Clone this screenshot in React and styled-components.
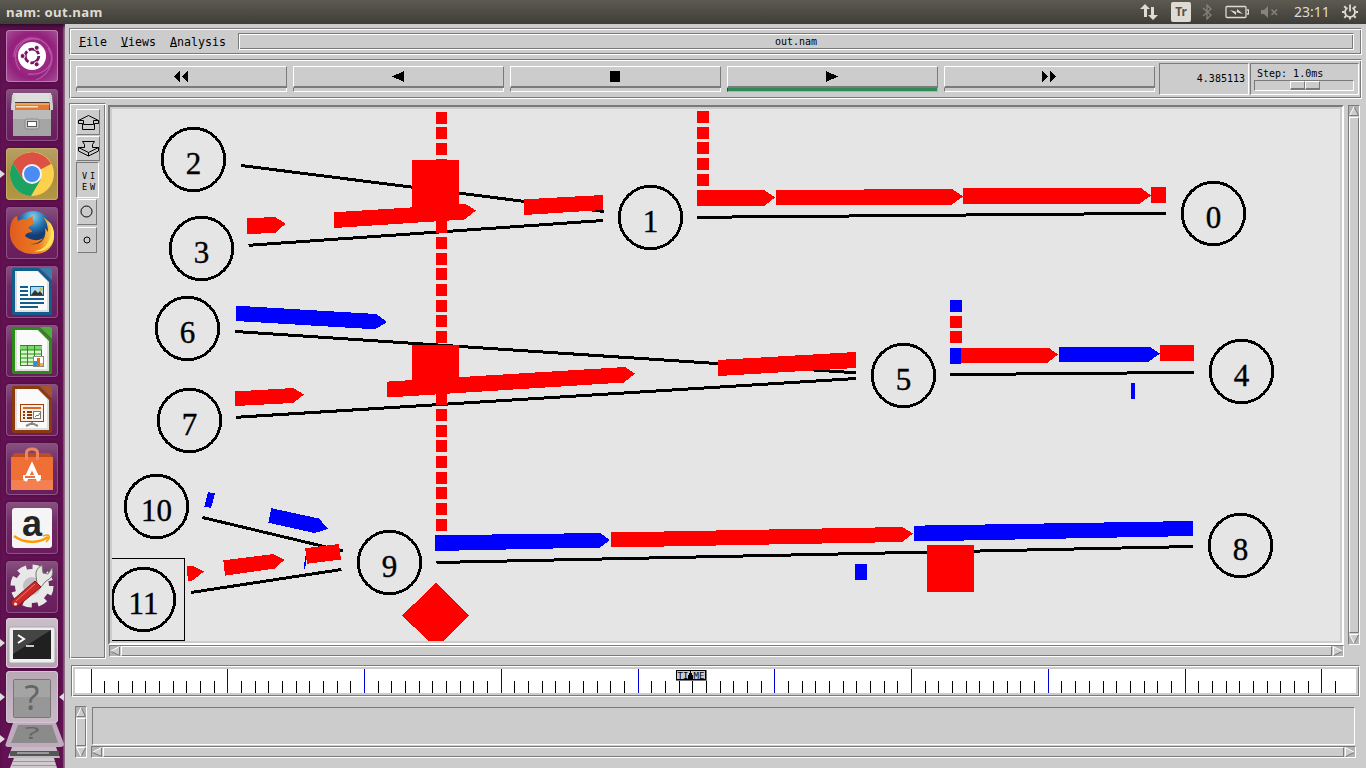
import React from "react";
import styled, { createGlobalStyle, css } from "styled-components";

const DARK = "#7a7a7a";
const FACE = "#cccccc";
const RED = "#ff0000";
const BLUE = "#0000ff";

const Global = createGlobalStyle`
  * { box-sizing: border-box; }
  html, body { margin: 0; padding: 0; overflow: hidden; }
  svg { display: block; }
`;

const raised = css`
  border: 1px solid;
  border-color: #fff ${DARK} ${DARK} #fff;
`;
const sunken = css`
  border: 1px solid;
  border-color: ${DARK} #fff #fff ${DARK};
`;
const groove = css`
  ${sunken}
  box-shadow: inset 1px 1px #fff, inset -1px -1px ${DARK};
`;

const Screen = styled.div`
  width: 1366px;
  height: 768px;
  display: flex;
  flex-direction: column;
  background: ${FACE};
  overflow: hidden;
`;

/* ---------- desktop bar ---------- */
const TopBar = styled.header`
  height: 24px;
  flex: none;
  display: flex;
  align-items: center;
  justify-content: space-between;
  padding: 0 7px 0 6px;
  background: linear-gradient(#5c5a50, #3e3d38);
  color: #dfdbd2;
`;
const WindowTitle = styled.div`
  font: bold 13.2px/24px "Noto Sans", sans-serif;
  letter-spacing: 0.4px;
  white-space: pre;
`;
const Tray = styled.div`
  display: flex;
  align-items: center;
  height: 24px;
`;
const Layout = styled.div`
  width: 20px;
  height: 20px;
  margin: 0 11px 0 13px;
  border-radius: 2px;
  background: #dfdbd2;
  color: #55534b;
  font: bold 12px/20px "Noto Sans", sans-serif;
  text-align: center;
`;
const Clock = styled.div`
  width: 37px;
  margin: 0 10px 0 15px;
  font: 14px/24px "Noto Sans", sans-serif;
`;
const Gap = styled.span`
  width: ${(p) => p.$w}px;
`;

const Body = styled.div`
  flex: 1;
  display: flex;
  min-height: 0;
`;

/* ---------- launcher ---------- */
const Launcher = styled.nav`
  width: 65px;
  flex: none;
  padding: 6px 0 0 6px;
  background: linear-gradient(90deg, #631253, #600f50 96%, #8d5c82 98%, #ab8ea5);
  box-shadow: inset 0 4px 4px -2px #2b0925;
  overflow: hidden;
`;
const Tile = styled.div`
  position: relative;
  width: 52px;
  height: ${(p) => p.$h || 52}px;
  margin-bottom: ${(p) => (p.$gap === undefined ? 7 : p.$gap)}px;
  border-radius: 4px;
  background: ${(p) => p.$bg || "linear-gradient(#87527f, #6f2a65 40%, #6a1c5c)"};
  box-shadow: inset 0 0 0 1px ${(p) => p.$edge || "#8d5384"}, 0 0 3px #3f0a35;
  display: flex;
  align-items: center;
  justify-content: center;
`;
const Pip = styled.i`
  position: absolute;
  top: 50%;
  margin-top: -4px;
  ${(p) => (p.$right ? "left: 53px; border-right: 5px solid #ddd;" : "left: -6px; border-left: 5px solid #ddd;")}
  border-top: 4px solid transparent;
  border-bottom: 4px solid transparent;
`;

/* ---------- nam window ---------- */
const Main = styled.main`
  flex: 1;
  padding: 4px 4px 0;
  display: flex;
  flex-direction: column;
  background: ${FACE};
  font-family: "DejaVu Sans Mono", monospace;
  color: #000;
`;
const MenuBar = styled.div`
  ${groove}
  height: 27px;
  flex: none;
  margin-bottom: 4px;
  padding: 4px 7px 3px 9px;
  display: flex;
  align-items: center;
`;
const MenuItem = styled.div`
  margin-right: 14px;
  font-size: 11.63px;
  line-height: 16px;
  u { text-decoration: underline; text-underline-offset: 0px; text-decoration-thickness: 1px; text-decoration-skip-ink: none; }
`;
const FileName = styled.div`
  ${groove}
  flex: 1;
  height: 17px;
  margin: -1px 0 0 -2px;
  font-size: 10px;
  line-height: 15px;
  text-align: center;
`;
const Toolbar = styled.div`
  ${groove}
  height: 40px;
  flex: none;
  margin-bottom: 4px;
  padding: 3px 1px 0 6px;
  display: flex;
`;
const Control = styled.div`
  width: 211px;
  margin: 3px 6px 0 0;
`;
const ControlFace = styled.div`
  height: 22px;
  border-style: solid;
  border-width: 1px 1px 2px 1px;
  border-color: #fff ${DARK} ${DARK} #fff;
  display: flex;
  align-items: center;
  justify-content: center;
  padding-right: 1px;
`;
const ControlStrip = styled.div`
  height: 4px;
  border: 1px solid;
  border-top: 0;
  border-color: ${(p) => (p.$on ? "#2e8b57 #8fc4a5 #8fc4a5 #1c5335" : `${DARK} #fff #fff ${DARK}`)};
  background: ${(p) => (p.$on ? "#2e8b57" : FACE)};
`;
const TimeBox = styled.div`
  ${sunken}
  width: 90px;
  height: 32px;
  margin: 0 1px 0 -2px;
  padding-right: 3px;
  font-size: 10px;
  line-height: 30px;
  text-align: right;
`;
const StepBox = styled.div`
  ${sunken}
  width: 109px;
  height: 32px;
  padding: 3px 3px 0;
  font-size: 10px;
  line-height: 14px;
  white-space: pre;
`;
const StepLabel = styled.div`
  height: 13px;
  padding-left: 3px;
`;
const StepTrough = styled.div`
  ${sunken}
  width: 100px;
  height: 11px;
  padding-left: 35px;
  display: flex;
`;
const StepThumb = styled.div`
  width: 15px;
  height: 9px;
  border-style: solid;
  border-width: 1px 1px 2px 1px;
  border-color: #fff ${DARK} ${DARK} #fff;
`;

const Work = styled.div`
  height: 556px;
  flex: none;
  display: flex;
`;
const Side = styled.div`
  ${groove}
  width: 37px;
  height: 556px;
  margin-right: 2px;
  padding: 5px 0 0 6px;
`;
const SideButton = styled.div`
  ${(p) => (p.$down ? sunken : raised)}
  width: ${(p) => p.$w}px;
  height: ${(p) => p.$h}px;
  margin: 0 0 ${(p) => p.$gap || 0}px ${(p) => p.$x || 0}px;
  display: flex;
  align-items: center;
  justify-content: center;
`;
const ViewLabel = styled.div`
  font-size: 8.5px;
  line-height: 11px;
  letter-spacing: 3px;
  white-space: pre;
  padding: 4px 0 0 5px;
`;
const CanvasColumn = styled.div`
  width: 1236px;
  padding-top: 2px;
`;
const CanvasFrame = styled.div`
  height: 540px;
  border: 2px solid;
  border-color: ${DARK} #fff #fff ${DARK};
  padding: 2px;
`;
const Canvas = styled.svg`
  width: 1228px;
  height: 532px;
  background: #e5e5e5;
`;
const HBar = styled.div`
  ${sunken}
  height: 12px;
  margin-left: ${(p) => p.$inset || 0}px;
  display: flex;
  gap: 1px;
`;
const VBar = styled.div`
  ${sunken}
  width: 12px;
  height: ${(p) => p.$h}px;
  margin: ${(p) => p.$m || 0};
  display: flex;
  flex-direction: column;
  gap: 1px;
`;
const Thumb = styled.div`
  ${raised}
  flex: 1;
`;

const Timeline = styled.div`
  ${groove}
  width: 1289px;
  height: 32px;
  flex: none;
  margin: 6px 0 9px 2px;
  padding: 3px;
`;
const Ruler = styled.svg`
  width: 1281px;
  height: 24px;
  background: #fff;
`;
const Bottom = styled.div`
  display: flex;
  margin-left: 6px;
  gap: 4px;
`;
const NoteColumn = styled.div`
  width: 1265px;
`;
const Note = styled.div`
  ${sunken}
  height: 38px;
  margin: 1px 1px 1px;
`;

const arrowShapes = {
  left: ["M9 1 L1 5 L9 9Z", "M9.5 .5 L1 5", "M1 5.5 L9.5 9.5 V1"],
  right: ["M1 1 L9 5 L1 9Z", "M.5 9 V.5 L9 5", "M9 5.5 L1 9.5"],
  up: ["M1 9 L5 1 L9 9Z", "M1 9 L5 .5", "M5.5 1 L9.5 9.5 H1"],
  down: ["M1 1 L9 1 L5 9Z", "M9 .5 H.5 L5 9", "M5.5 9 L9.5 1"],
};
function ScrollArrow({ dir }) {
  const [fill, light, dark] = arrowShapes[dir];
  return (
    <svg width="10" height="10" viewBox="0 0 10 10" fill="none">
      <rect width="10" height="10" fill="#b3b3b3" />
      <path d={fill} fill="#ccc" />
      <path d={dark} stroke={DARK} />
      <path d={light} stroke="#fff" />
    </svg>
  );
}

/* ---------- network scene ---------- */
const nodes = [
  ["2", 193.5, 159.5], ["3", 201.5, 248.5], ["1", 650.5, 217.5], ["0", 1213.5, 213.5],
  ["6", 187.5, 328.5], ["7", 189.5, 420.5], ["5", 903.5, 375.5], ["4", 1241.5, 371.5],
  ["10", 156.5, 506.5], ["11", 143.5, 599.5], ["9", 389.5, 562.5], ["8", 1240.5, 545.5],
];
const links = [
  [241, 165.5, 604, 211.5], [248.5, 245.3, 603, 220.5], [697.5, 217.3, 1166, 213.3],
  [235, 331.5, 856, 372.8], [236, 417.3, 856, 378.5], [950, 374.6, 1194, 372.4],
  [202.5, 517.5, 343, 551], [191, 592.5, 341.5, 569.5], [436.5, 562.5, 1193, 546.5],
];
const shapes = [
  [RED, "246.7,218.3 275,217 285.7,223.7 275,233 247,234"],
  [RED, "333.6,212.3 465.5,204 476,210.5 464.5,219.5 334,228"],
  [RED, "524,199.3 603,195 603,210 524,215"],
  [RED, "697,190 764,190 775,197.5 764,206 697,206"],
  [RED, "775.5,190 952,189 963,196.5 951,205 776,205"],
  [RED, "963,188 1141,188 1151,195.5 1139,204 963,204"],
  [RED, "1151,187 1166,187 1166,203 1151,203"],
  [BLUE, "236,305.7 376.5,314 387,322 375,329.3 236,321"],
  [RED, "235,391.5 293,388 304,394.5 293,403 235.5,406"],
  [RED, "387,381.6 625,367 635,373.5 624,382.5 387.5,397.5"],
  [RED, "717.5,360 856,352 856,368 718,376"],
  [RED, "961,348 1049,348 1058,354.5 1047,363 961,363"],
  [BLUE, "950,348 961,348 961,364 950,364"],
  [BLUE, "1058.5,347 1150,347 1160,353.5 1148,362 1059,362"],
  [RED, "1160,345 1194,345 1194,361 1160,361"],
  [BLUE, "1131,383 1135,383 1135,399 1131,399"],
  [BLUE, "435,535.3 600,533 610,540 600,547.5 435,551"],
  [RED, "611,532.5 902,527 913,533.5 902,542 611,547.5"],
  [BLUE, "914,525.7 1193,521 1193,536 914,541.5"],
  [BLUE, "855,564 867,564 867,580 855,580"],
  [BLUE, "208,492 215,493.5 211,508 204.5,506.5"],
  [BLUE, "271.3,508.2 319,518.5 328,529 314.5,533 268.3,522.7"],
  [BLUE, "305.5,556 307,556 305,569 303.5,569"],
  [RED, "305.2,548.3 339,544 341,559.5 307,563.7"],
  [RED, "223.3,560.3 273.5,554 284.7,559.7 274.7,568.5 225,575.7"],
  [RED, "186.5,566 192.5,566 204,571.5 192.5,580.5 188,580.5"],
  [RED, "412,160 459,160 459,207 412,207"],
  [RED, "412,345 459,345 459,392 412,392"],
  [RED, "927,545 974,545 974,592 927,592"],
  [RED, "436,583 469,615.5 436,648 402,615.5"],
];
const queues = [
  ...Array.from({ length: 27 }, (_, k) => [436, Math.round(111.7 + k * 15.654), 11, RED]),
  ...[111, 127, 142, 158, 174].map((y) => [697, y, 12, RED]),
  [950, 300, 12, BLUE], [950, 316, 12, RED], [950, 331, 12, RED],
];

const NodeLabel = styled.text`
  font-family: "Liberation Serif", serif;
  font-size: 31px;
  text-anchor: middle;
  stroke: #000;
  stroke-width: 0.4px;
`;

function Scene() {
  return (
    <Canvas viewBox="112 109 1228 532" shapeRendering="crispEdges">
      <g stroke="#000" strokeWidth="3">
        {links.map(([a, b, c, d]) => <line key={a + b} x1={a} y1={b} x2={c} y2={d} />)}
      </g>
      {queues.map(([x, y, w, c]) => <rect key={x + "-" + y} x={x} y={y} width={w} height={12} fill={c} />)}
      {shapes.map(([c, p]) => <polygon key={p} points={p} fill={c} />)}
      <path d="M112 558.5H184.5V640.5H112" fill="none" stroke="#000" />
      {nodes.map(([n, x, y]) => (
        <g key={n}>
          <circle cx={x} cy={y} r="31.2" fill="none" stroke="#000" strokeWidth="2.9" />
          <NodeLabel x={x} y={y + 14}>{n}</NodeLabel>
        </g>
      ))}
    </Canvas>
  );
}

const MarkerText = styled.text`
  font: 9px "DejaVu Sans Mono", monospace;
`;
function TimeRuler() {
  return (
    <Ruler viewBox="75 669 1281 24" shapeRendering="crispEdges">
      {Array.from({ length: 92 }, (_, k) => {
        const x = Math.floor(91 + k * 13.676);
        const major = k % 10 === 0;
        return <rect key={k} x={x} y={major ? 669 : 681} width="1" height={major ? 24 : 12} fill={major ? "#0000d8" : "#000"} />;
      })}
      <rect x="676" y="670" width="31" height="11" fill={DARK} />
      <rect x="676.5" y="670.5" width="29" height="9" fill="#ccc" stroke="#000" />
      <MarkerText x="677.5" y="678.500">TI</MarkerText>
      <MarkerText x="693.5" y="678.500">ME</MarkerText>
      <path d="M690 670h1v3h1v2h1v5h-5v-5h1v-2h1z" />
    </Ruler>
  );
}

/* ---------- launcher drawings ---------- */
const DashIcon = () => (
  <svg width="52" height="52" viewBox="0 0 52 52">
    <path d="M8 27C8 9 28 2 40 14s5 30-10 36M14 40C2 24 16 4 34 10M42 18c10 16-4 28-20 26" fill="none" stroke="#d282bd" strokeWidth="1.3" opacity=".5" />
    <circle cx="26" cy="26" r="14" fill="#fff" />
    <circle cx="26" cy="26" r="6.8" fill="none" stroke="#771465" strokeWidth="2.8" strokeDasharray="12.2 2" />
    <g fill="#771465" stroke="#fff" strokeWidth="1"><circle cx="16.6" cy="26" r="2.5" /><circle cx="30.7" cy="17.8" r="2.5" /><circle cx="30.7" cy="34.3" r="2.5" /></g>
  </svg>
);
const FilesIcon = () => (
  <svg width="52" height="52" viewBox="0 0 52 52">
    <path d="M7 4h38l2 15H5z" fill="#ddd" /><path d="M8 13h36v10H8z" fill="#4a3b30" />
    <path d="M9 14h34v3H9z" fill="#f2a25c" /><path d="M9 16h34v6H9z" fill="#e27a33" /><path d="M10 17h22v1.5H10z" fill="#fde2bf" />
    <path d="M7 21h38v26H7z" fill="#a5a5a3" /><path d="M7 21h38v9H7z" fill="#bbb" /><path d="M6 6h3v15H5zM43 6h3l1 15h-3z" fill="#d2d2d0" />
    <rect x="19" y="30" width="14" height="10" rx="2" fill="#c4c4c2" stroke="#888" /><rect x="21.5" y="32.500" width="9" height="5" fill="#fff" stroke="#555" />
  </svg>
);
const ChromeIcon = () => (
  <svg width="52" height="52" viewBox="0 0 52 52">
    <circle cx="26" cy="26" r="22" fill="#fdd14c" />
    <path d="M26 26L7 15A22 22 0 0 1 45 16Z" fill="#dd5144" />
    <path d="M26 16H45A22 22 0 0 0 7 15L17 31Z" fill="#dd5144" />
    <path d="M7 15A22 22 0 0 0 25 48L35 31 26 35 17 31Z" fill="#1ca261" />
    <circle cx="26" cy="26" r="10" fill="#f4f4f4" /><circle cx="26" cy="26" r="8" fill="#4b8bf4" />
  </svg>
);
const FirefoxIcon = () => (
  <svg width="52" height="52" viewBox="0 0 52 52">
    <defs>
      <radialGradient id="globe" cx=".5" cy=".15"><stop stopColor="#7fd3ee" /><stop offset=".6" stopColor="#2674b0" /><stop offset="1" stopColor="#163c72" /></radialGradient>
      <linearGradient id="fox" x1="0" x2="1"><stop stopColor="#df5b1f" /><stop offset=".65" stopColor="#ee7b20" /><stop offset="1" stopColor="#ffdf55" /></linearGradient>
    </defs>
    <circle cx="27" cy="23" r="19" fill="url(#globe)" />
    <path d="M6 14c1-3 4-5 5-5l1 5c3-2 6-2 9-2l6-3c-1 4 0 6 2 8-3 0-5 2-7 4 2 1 4 2 4 4-3 0-6 1-7 4 5 4 12 6 18 2-3 5-9 6-13 6 11 2 17-6 15-16l3 4c0-7-2-12-5-15 7 4 12 12 11 21C47 42 37 48 27 47 12 47 3 36 4 24c0-5 1-8 2-10z" fill="url(#fox)" />
    <path d="M42 14c4 7 4 17-1 23-4 5-9 7-14 7 9 2 20-3 21-16 0-6-2-11-6-14z" fill="#ffe35c" />
  </svg>
);
function DocIcon({ main, light, children }) {
  return (
    <svg width="52" height="52" viewBox="0 0 52 52">
      <path d="M8 2H33L46 15V48q0 1-2 1H8q-2 0-2-2V4q0-2 2-2z" fill={main} />
      <path d="M34 2h10q2 0 2 2v10z" fill={light} />
      <path d="M9 5H32L43 16V46H9z" fill="#dedede" /><path d="M11 5H31L41 15V44H11z" fill="#fafafa" />
      {children}
    </svg>
  );
}
const WriterIcon = () => (
  <DocIcon main="#115e8e" light="#347fab">
    <path d="M14 21h8M14 25h8M14 29h8M14 33h24M14 37h24M14 41h18" stroke="#115e8e" strokeWidth="2" />
    <rect x="24.500" y="20.500" width="13" height="9" fill="#a7dcf5" stroke="#115e8e" /><path d="M25 29l4-5 3 3 2-2 3 4z" fill="#333" /><circle cx="35" cy="23" r="1.500" fill="#e3b91d" />
  </DocIcon>
);
const CalcIcon = () => (
  <DocIcon main="#2a8c16" light="#4caf38">
    <rect x="14.500" y="20.500" width="21" height="20" fill="#d7f7cd" stroke="#2a8c16" /><path d="M14 21h22v4H14z" fill="#7fd56f" /><path d="M14 25h22M14 29h22M14 33h22M14 37h22M21.500 20v21M28.500 20v21" stroke="#2a8c16" />
    <rect x="27.500" y="31.500" width="10" height="10" fill="#fff" stroke="#888" /><path d="M28 36h3v5h-3z" fill="#2f8fd0" /><path d="M31 33h3v8h-3z" fill="#dc6b22" /><path d="M34 38h3v3h-3z" fill="#efb52a" />
  </DocIcon>
);
const ImpressIcon = () => (
  <DocIcon main="#8a3a0c" light="#a55528">
    <path d="M20 42l6-3 6 3M26 38v3" stroke="#888" strokeWidth="2" fill="none" />
    <rect x="14.500" y="20.500" width="23" height="17" fill="#fceee2" stroke="#a33e08" /><path d="M17 24h18" stroke="#dc6825" strokeWidth="2" />
    <path d="M17 28h2M17 31h2M17 34h2M21 28h5M21 31h5M21 34h5" stroke="#8a3a0c" strokeWidth="2" />
    <rect x="27.500" y="27.500" width="7" height="7" fill="#fff" stroke="#777" /><path d="M29 33l2-2 1 1 2-3" stroke="#3b9c2f" fill="none" />
  </DocIcon>
);
const SoftwareIcon = () => (
  <svg width="52" height="52" viewBox="0 0 52 52">
    <path d="M8 10h36l3 5H5z" fill="#be4c20" /><path d="M5 14h42v33H5z" fill="#ef6f35" /><path d="M5 37h42v10H5z" fill="#f28050" />
    <path d="M20.500 17v-7q0-4 5.500-4t5.500 4v7" fill="none" stroke="#eb8760" strokeWidth="3" />
    <path d="M19 38L26 23L33 38" fill="none" stroke="#fff" strokeWidth="4" /><path d="M17 34h18" stroke="#fff" strokeWidth="4" /><path d="M19 34h10" stroke="#ef6f35" strokeWidth="2" />
  </svg>
);
const AmazonLetter = styled.text`
  font: bold 36px "Liberation Sans", sans-serif;
  text-anchor: middle;
`;
const AmazonIcon = () => (
  <svg width="52" height="52" viewBox="0 0 52 52">
    <rect x="6" y="6" width="40" height="40" rx="3" fill="#f5f5f5" />
    <AmazonLetter x="26" y="34" fill="#242424">a</AmazonLetter>
    <path d="M8 34c9 7 24 8 34 1" fill="none" stroke="#ff9900" strokeWidth="2.300" /><path d="M37 34q5-2 6 0t-3 6" fill="none" stroke="#ff9900" strokeWidth="1.600" />
  </svg>
);
const SettingsIcon = () => (
  <svg width="52" height="52" viewBox="0 0 52 52">
    <circle cx="26" cy="25" r="18.500" fill="none" stroke="#e8e8e8" strokeWidth="6" strokeDasharray="8.500 6.030" />
    <circle cx="26" cy="25" r="13" fill="#c4bfc4" stroke="#e8e8e8" strokeWidth="8" />
    <path d="M31 22l-1-7q-1-7 6-11l1 8 5 1 4-6q3 9-6 13l-5 6z" fill="#e6e6e2" stroke="#777" />
    <path d="M29 20l6 6-23 19q-4 2-6-1-2-3 1-5z" fill="#cd2929" stroke="#801818" /><path d="M10 40L29 23" stroke="#ef7777" /><circle cx="9.500" cy="43" r="1.500" fill="#fff" />
  </svg>
);
const TerminalIcon = () => (
  <svg width="52" height="50" viewBox="0 0 52 50">
    <rect x="3" y="9" width="46" height="36" rx="2" fill="#eee" stroke="#aaa" />
    <rect x="7" y="12" width="38" height="29" fill="#202020" /><path d="M7 12h38L7 36z" fill="#444" />
    <path d="M12 17l6 4-6 4" fill="none" stroke="#fff" strokeWidth="2" /><path d="M20 28h8" stroke="#fff" strokeWidth="1.500" />
  </svg>
);
const Question = styled.text`
  font: 34px "Noto Sans", sans-serif;
  text-anchor: middle;
  fill: #666;
`;
const UnknownIcon = () => (
  <svg width="52" height="52" viewBox="0 0 52 52">
    <rect x="7.500" y="8.500" width="37" height="38" rx="1" fill="#979797" stroke="#777" /><path d="M8 9h36v17H8z" fill="#a4a4a4" />
    <Question x="26" y="39">?</Question>
  </svg>
);
const FoldedIcons = () => (
  <svg width="60" height="45" viewBox="0 0 60 45">
    <path d="M8 0h43l8 21q0 3-4 3H4q-5 0-3-4z" fill="#c0aabd" /><path d="M13 2h34l6 18H6z" fill="#8b8b8b" />
    <g transform="translate(27 16) scale(1 .5)"><Question>?</Question></g>
    <path d="M7 24h44l4 11H3z" fill="#c6bac4" /><path d="M5 28h49v5H5z" fill="#555" /><path d="M12 29h32v2H12z" fill="#999" /><path d="M5 33h49v2H5z" fill="#bbb" />
    <path d="M9 35h40l3 10H5z" fill="#d0cacf" /><path d="M8 38h42v1H8zM7 42h44v1H7z" fill="#999" />
  </svg>
);
const Folded = styled.div`
  position: relative;
  width: 58px;
  height: 45px;
  margin-left: -1px;
`;
const FoldedPip = styled(Pip)`
  left: -5px;
  top: 16px;
`;

function Dock() {
  return (
    <Launcher>
      <Tile $bg="radial-gradient(circle, #b23b98, #93207c 60%, #a45598)" $edge="#c27ab5"><DashIcon /></Tile>
      <Tile><FilesIcon /></Tile>
      <Tile $bg="linear-gradient(#b8a067, #aa8b3e 50%, #b49845)" $edge="#c5ae6d"><ChromeIcon /><Pip /></Tile>
      <Tile><FirefoxIcon /></Tile>
      <Tile><WriterIcon /></Tile>
      <Tile><CalcIcon /></Tile>
      <Tile><ImpressIcon /></Tile>
      <Tile><SoftwareIcon /></Tile>
      <Tile><AmazonIcon /></Tile>
      <Tile $gap={5}><SettingsIcon /></Tile>
      <Tile $h={50} $gap={3} $bg="linear-gradient(#cbbfc9, #b69fb3)" $edge="#d8ced6"><TerminalIcon /><Pip /></Tile>
      <Tile $gap={0} $bg="linear-gradient(#b9a7b6, #c7bac5)" $edge="#d3c5d1"><UnknownIcon /><Pip /><Pip $right /></Tile>
      <Folded><FoldedIcons /><FoldedPip /></Folded>
    </Launcher>
  );
}

/* ---------- controls ---------- */
const controls = [
  <path key="rw" d="M7 0v11L1 5.500zM15 0v11L9 5.500z" />,
  <path key="back" d="M14 0v11L2 5.500z" />,
  <path key="stop" d="M3 0h10v11H3z" />,
  <path key="play" d="M2 0v11L14 5.500z" />,
  <path key="ff" d="M1 0v11L7 5.500zM9 0v11l6-5.500z" />,
];

export default function App() {
  return (
    <Screen>
      <Global />
      <TopBar>
        <WindowTitle>nam: out.nam</WindowTitle>
        <Tray>
          <svg width="18" height="18" viewBox="0 0 18 18" fill="#dfdbd2"><path d="M5 1l5 5H7v8H4V6H0zM13 17l5-5h-4V4h-3v8H8z" /></svg>
          <Layout>Tr</Layout>
          <svg width="10" height="16" viewBox="0 0 10 16" fill="none" stroke="#85837a" strokeWidth="1.300"><path d="M1 4l8 7-4 4V1l4 4-8 7" /></svg>
          <Gap $w={13} />
          <svg width="24" height="14" viewBox="0 0 24 14" fill="none" stroke="#dfdbd2" strokeWidth="1.300"><rect x="1" y="1.500" width="20" height="11" rx="1" /><path d="M22 5h1.500v4H22" /><path d="M5 5l7 2V4l6 5-7-2v3z" fill="#dfdbd2" stroke="none" /></svg>
          <Gap $w={12} />
          <svg width="18" height="12" viewBox="0 0 18 12" fill="#85837a"><path d="M0 4h3l4-4v12L3 8H0z" /><path d="M10.500 3.500l5.500 5.500M16 3.500L10.500 9" stroke="#85837a" strokeWidth="1.600" /></svg>
          <Clock>23:11</Clock>
          <svg width="18" height="18" viewBox="0 0 18 18" fill="none" stroke="#dfdbd2"><path d="M6.500 4.700a5 5 0 1 0 5 0M9 1.500v7" strokeWidth="1.800" /><path d="M9 16.500v-2.500M1 9h2.500M14.500 9H17M3.300 14.700l1.800-1.800M14.700 14.700l-1.800-1.800M3.300 3.300l1.800 1.800M14.700 3.300l-1.800 1.800" strokeWidth="2" /></svg>
        </Tray>
      </TopBar>
      <Body>
        <Dock />
        <Main>
          <MenuBar>
            <MenuItem><u>F</u>ile</MenuItem>
            <MenuItem><u>V</u>iews</MenuItem>
            <MenuItem><u>A</u>nalysis</MenuItem>
            <FileName>out.nam</FileName>
          </MenuBar>
          <Toolbar>
            {controls.map((icon, i) => (
              <Control key={i}>
                <ControlFace><svg width="16" height="11" viewBox="0 0 16 11" shapeRendering="crispEdges">{icon}</svg></ControlFace>
                <ControlStrip $on={i === 3} />
              </Control>
            ))}
            <TimeBox>4.385113</TimeBox>
            <StepBox>
              <StepLabel>Step: 1.0ms</StepLabel>
              <StepTrough><StepThumb /><StepThumb /></StepTrough>
            </StepBox>
          </Toolbar>
          <Work>
            <Side>
              <SideButton $w={24} $h={26} $gap={1}>
                <svg width="21" height="15" viewBox="0 0 21 15" fill="none" stroke="#000"><path d="M10.500 .5L.5 5.500H5.500V9.500H15.500V5.500H20.500ZM4.500 8.500V14.500H16.500V8.500M.5 5.500V8.500H4.500M20.500 5.500V8.500H16.500" /></svg>
              </SideButton>
              <SideButton $w={24} $h={25} $gap={1}>
                <svg width="21" height="16" viewBox="0 0 21 16" fill="none" stroke="#000"><path d="M4.500 .5h12l-2 3v3h6L10.500 11.500.5 6.500h6v-3zM.5 6.500v3.500l10 5 10-5V6.500M10.500 11.500v3.500" /></svg>
              </SideButton>
              <SideButton $down $w={23} $h={36} $gap={1}><ViewLabel>{"VI\nEW"}</ViewLabel></SideButton>
              <SideButton $x={1} $w={20} $h={26} $gap={2}>
                <svg width="14" height="14" viewBox="0 0 14 14" fill="none" stroke="#000"><circle cx="6.500" cy="6.500" r="5.500" /></svg>
              </SideButton>
              <SideButton $x={1} $w={20} $h={26}>
                <svg width="8" height="8" viewBox="0 0 8 8" fill="none" stroke="#000"><circle cx="4" cy="4" r="3" /></svg>
              </SideButton>
            </Side>
            <CanvasColumn>
              <CanvasFrame><Scene /></CanvasFrame>
              <HBar $inset={1}><ScrollArrow dir="left" /><Thumb /><ScrollArrow dir="right" /></HBar>
            </CanvasColumn>
            <VBar $h={540} $m="2px 0 0 4px"><ScrollArrow dir="up" /><Thumb /><ScrollArrow dir="down" /></VBar>
          </Work>
          <Timeline><TimeRuler /></Timeline>
          <Bottom>
            <VBar $h={52}><ScrollArrow dir="up" /><Thumb /><ScrollArrow dir="down" /></VBar>
            <NoteColumn>
              <Note />
              <HBar><ScrollArrow dir="left" /><Thumb /><ScrollArrow dir="right" /></HBar>
            </NoteColumn>
          </Bottom>
        </Main>
      </Body>
    </Screen>
  );
}
